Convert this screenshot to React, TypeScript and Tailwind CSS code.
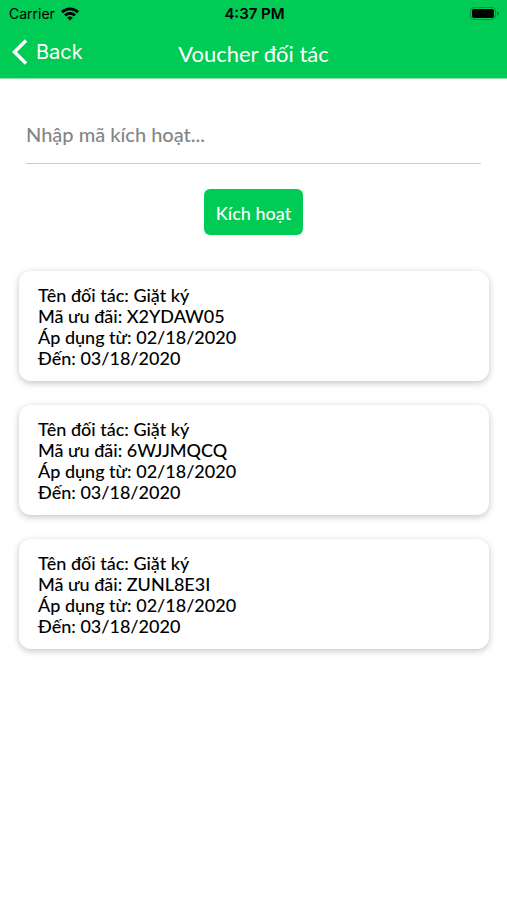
import { useState } from "react";

type Voucher = { partner: string; code: string; from: string; to: string };

const vouchers: Voucher[] = [
  { partner: "Giặt ký", code: "X2YDAW05", from: "02/18/2020", to: "03/18/2020" },
  { partner: "Giặt ký", code: "6WJJMQCQ", from: "02/18/2020", to: "03/18/2020" },
  { partner: "Giặt ký", code: "ZUNL8E3I", from: "02/18/2020", to: "03/18/2020" },
];

function WifiIcon() {
  return (
    <svg viewBox="0 0 18 14" className="h-[14px] w-[18px]" fill="none" stroke="black" strokeWidth="2.7" aria-hidden="true">
      <path d="M1 5.2C5.5.7 12.5.7 17 5.2" />
      <path d="M4 8.4C6.8 5.6 11.2 5.6 14 8.4" />
      <path d="M9 13.5 6.2 10.7C7.8 9.2 10.2 9.2 11.8 10.7Z" fill="black" stroke="none" />
    </svg>
  );
}

function BatteryIcon() {
  return (
    <svg viewBox="0 0 30 14" className="h-[14px] w-[30px]" aria-hidden="true">
      <rect x="0.5" y="0.5" width="25" height="12" rx="3.5" fill="none" stroke="#008f3b" />
      <rect x="2" y="2" width="22" height="9" rx="2" fill="black" />
      <path d="M27 4.5C29.3 5.1 29.3 7.9 27 8.5Z" fill="#007a33" />
    </svg>
  );
}

function StatusBar() {
  return (
    <div className="grid h-7 grid-cols-[1fr_auto_1fr] items-center pr-[7px] pl-[9px] text-sm text-black">
      <div className="flex items-center gap-1.5">
        <span>Carrier</span>
        <WifiIcon />
      </div>
      <span className="text-center text-[15px] font-semibold">4:37 PM</span>
      <div className="flex justify-end">
        <BatteryIcon />
      </div>
    </div>
  );
}

function NavBar() {
  return (
    <div className="grid h-[50px] grid-cols-[1fr_auto_1fr] items-center px-3 pb-0.5 text-white">
      <button type="button" className="flex items-center gap-2 justify-self-start text-xl">
        <svg viewBox="0 0 16 26" className="h-[26px] w-4" fill="none" stroke="white" strokeWidth="3.5" aria-hidden="true">
          <path d="M14 1.5 2.5 13 14 24.5" />
        </svg>
        Back
      </button>
      <h1 className="pt-1 font-['Lato',sans-serif] text-[22px] leading-7">Voucher đối tác</h1>
    </div>
  );
}

function VoucherCard({ voucher }: { voucher: Voucher }) {
  return (
    <li className="rounded-xl bg-white px-[19px] pt-[14px] pb-3 text-lg leading-[21px] shadow-[0_2px_7px_rgba(0,0,0,0.24)]">
      <p>Tên đối tác: {voucher.partner}</p>
      <p>Mã ưu đãi: {voucher.code}</p>
      <p>Áp dụng từ: {voucher.from}</p>
      <p>Đến: {voucher.to}</p>
    </li>
  );
}

export default function App() {
  const [code, setCode] = useState("");
  return (
    <div className="min-h-screen bg-white font-['Inter',sans-serif] text-black">
      <header className="border-b border-[#8be3ae] bg-[#00cb54]">
        <StatusBar />
        <NavBar />
      </header>
      <main className="font-['Lato',sans-serif] font-medium">
        <form className="flex flex-col items-center px-[26px] pt-[26px]" onSubmit={(e) => e.preventDefault()}>
          <input
            type="text"
            aria-label="Mã kích hoạt"
            value={code}
            onChange={(e) => setCode(e.target.value)}
            placeholder="Nhập mã kích hoạt..."
            className="h-[59px] w-full border-b border-[#cccccc] text-xl outline-none placeholder:text-[#858585]"
          />
          <button type="submit" className="mt-[25px] h-[46px] rounded-md bg-[#00cb54] px-3 pt-0.5 text-lg text-white">
            Kích hoạt
          </button>
        </form>
        <ul className="mt-9 flex flex-col gap-6 px-[18px] pl-[19px]">
          {vouchers.map((v) => (
            <VoucherCard key={v.code} voucher={v} />
          ))}
        </ul>
      </main>
    </div>
  );
}
